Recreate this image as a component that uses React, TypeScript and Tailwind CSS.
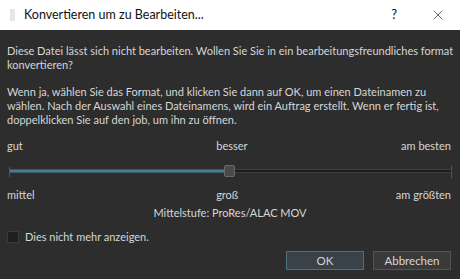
import { X } from "lucide-react";

const Line = ({ children }: { children: React.ReactNode }) => (
  <div className="h-[14px] leading-[14px] whitespace-nowrap">{children}</div>
);

export default function App() {
  return (
    <div className="w-[460px] h-[279px] flex flex-col bg-[#2d2d2d] text-[#d6d6d6] text-[11px] font-['Lato',sans-serif] overflow-hidden">
      {/* title bar */}
      <div className="h-[30px] bg-white flex items-center text-[#111] text-[12.5px]">
        <div className="w-[5px] h-[12px] ml-[10px] mr-[9px] bg-[#e6e6e6]" />
        <span>Konvertieren um zu Bearbeiten...</span>
        <span className="ml-auto mr-[33px] text-[13px]">?</span>
        <X className="mr-[14px] text-[#222]" size={16} strokeWidth={1} />
      </div>

      <div className="flex flex-col px-[7px] pt-[14px]">
        <Line>Diese Datei lässt sich nicht bearbeiten. Wollen Sie Sie in ein bearbeitungsfreundliches format</Line>
        <Line>konvertieren?</Line>
        <div className="h-[13px]" />
        <Line>Wenn ja, wählen Sie das Format, und klicken Sie dann auf OK, um einen Dateinamen zu</Line>
        <Line>wählen. Nach der Auswahl eines Dateinamens, wird ein Auftrag erstellt. Wenn er fertig ist,</Line>
        <Line>doppelklicken Sie auf den job, um ihn zu öffnen.</Line>

        <div className="h-[12px]" />
        <div className="flex justify-between h-[14px] leading-[14px]">
          <span>gut</span>
          <span className="ml-[40px]">besser</span>
          <span className="mr-[2px]">am besten</span>
        </div>

        {/* slider */}
        <div className="relative h-[36px] mt-[2px]">
          <div className="absolute left-[1px] right-[1px] top-[14px] h-[4px] bg-[#1c1c1c] border-y border-[#3f3f3f]" />
          <div className="absolute left-[3px] w-[220px] top-[14px] h-[4px] bg-[#4d7a8e] border-y border-[#37596a]" />
          <div className="absolute left-[2px] top-[12px] w-[1px] h-[10px] bg-[#555]" />
          <div className="absolute right-[1px] top-[11px] w-[1px] h-[12px] bg-[#555]" />
          <div className="absolute left-[217px] top-[10px] w-[11px] h-[12px] rounded-[2px] bg-[#4a4a4a] border border-[#6a6a6a]" />
        </div>

        <div className="flex justify-between h-[14px] leading-[14px] -mt-[3px]">
          <span>mittel</span>
          <span className="ml-[24px]">groß</span>
          <span className="mr-[2px]">am größten</span>
        </div>
        <div className="text-center h-[14px] leading-[14px] mt-[4px]">Mittelstufe: ProRes/ALAC MOV</div>

        <div className="flex items-center mt-[10px] h-[14px]">
          <div className="w-[12px] h-[12px] bg-[#1e1e1e] border border-[#3a3a3a]" />
          <span className="ml-[6px]">Dies nicht mehr anzeigen.</span>
        </div>

        <div className="flex justify-end gap-[9px] mt-[7px] mr-[2px]">
          <button className="w-[78px] h-[19px] bg-[#394248] border border-[#4d6f82] text-[#d6d6d6] text-[11.5px] leading-[17px]">OK</button>
          <button className="w-[78px] h-[19px] bg-[#3a3a3a] border border-[#555] text-[#d6d6d6] text-[11.5px] leading-[17px]">Abbrechen</button>
        </div>
      </div>
    </div>
  );
}
